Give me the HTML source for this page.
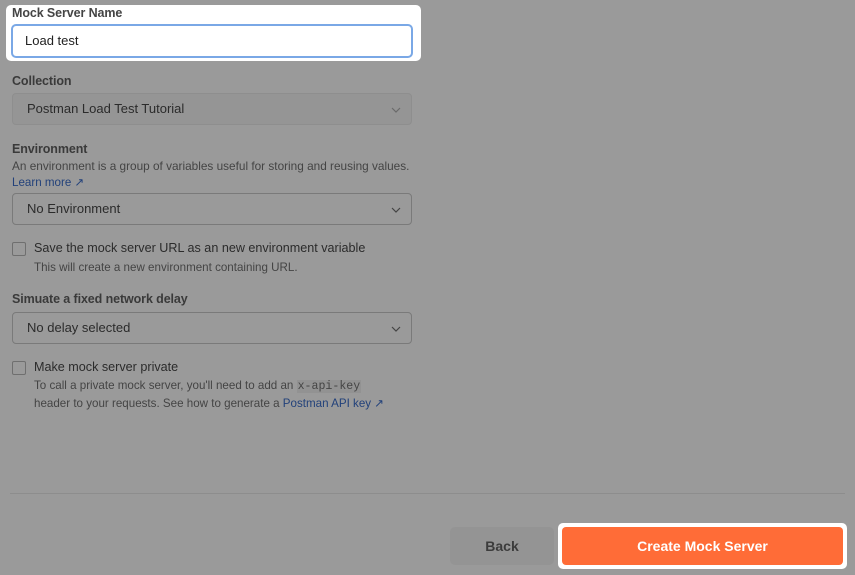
<!DOCTYPE html>
<html><head><meta charset="utf-8"><style>
body{margin:0;width:855px;height:575px;background:#9a9a9a;font-family:"Liberation Sans",sans-serif;position:relative;overflow:hidden;color:#2b2b2b}
.a{position:absolute}
.lbl{font-size:12.5px;font-weight:bold;color:#3a3a3a;letter-spacing:-0.1px}
.sel{position:absolute;left:12px;width:400px;height:30px;border:1px solid #7a7a7a;border-radius:4px;box-sizing:border-box;font-size:13px;line-height:28px;padding-left:14px;color:#2b2b2b}
.chev{position:absolute;right:10px;top:10px}
.cb{position:absolute;left:12px;width:14px;height:14px;border:1px solid #6f6f6f;border-radius:2px;box-sizing:border-box}
.t{font-size:12.6px;color:#2b2b2b}
.s{font-size:11.6px;color:#444}
.lnk{color:#22417a}
</style></head><body>
<div class="a" style="left:6px;top:5px;width:415px;height:56px;background:#fff;border-radius:5px"></div>
<div class="a lbl" style="left:12px;top:6px;color:#444">Mock Server Name</div>
<div class="a" style="left:11px;top:24px;width:402px;height:34px;border:2px solid #7aa8e6;border-radius:5px;box-sizing:border-box;font-size:13px;line-height:30px;padding-left:12px;color:#222">Load test</div>

<div class="a lbl" style="left:12px;top:74px">Collection</div>
<div class="sel" style="top:93px;height:32px;background:#959595;border-color:#8e8e8e;line-height:30px">Postman Load Test Tutorial<svg class="chev" width="10" height="8" viewBox="0 0 10 8" style="top:12px"><path d="M1 2l4 4 4-4" stroke="#6a6a6a" fill="none" stroke-width="1.2"/></svg></div>

<div class="a lbl" style="left:12px;top:142px">Environment</div>
<div class="a s" style="left:12px;top:159px;font-size:11.8px">An environment is a group of variables useful for storing and reusing values.</div>
<div class="a s lnk" style="left:12px;top:175px">Learn more ↗</div>
<div class="sel" style="top:193px;height:32px;line-height:30px">No Environment<svg class="chev" width="10" height="8" viewBox="0 0 10 8" style="top:12px"><path d="M1 2l4 4 4-4" stroke="#444" fill="none" stroke-width="1.2"/></svg></div>

<div class="cb" style="top:242px"></div>
<div class="a t" style="left:34px;top:241px">Save the mock server URL as an new environment variable</div>
<div class="a s" style="left:34px;top:261px">This will create a new environment containing URL.</div>

<div class="a lbl" style="left:12px;top:292px">Simuate a fixed network delay</div>
<div class="sel" style="top:312px;height:32px;line-height:30px">No delay selected<svg class="chev" width="10" height="8" viewBox="0 0 10 8" style="top:12px"><path d="M1 2l4 4 4-4" stroke="#444" fill="none" stroke-width="1.2"/></svg></div>

<div class="cb" style="top:361px"></div>
<div class="a t" style="left:34px;top:360px">Make mock server private</div>
<div class="a s" style="left:34px;top:379px">To call a private mock server, you'll need to add an <span style="font-family:'Liberation Mono',monospace;background:#929292;padding:0 1px">x-api-key</span></div>
<div class="a s" style="left:34px;top:396px">header to your requests. See how to generate a <span class="lnk">Postman API key ↗</span></div>

<div class="a" style="left:10px;top:493px;width:835px;height:1px;background:#8d8d8d"></div>

<div class="a" style="left:450px;top:527px;width:104px;height:38px;background:#949494;border-radius:5px;font-size:14px;font-weight:bold;color:#3c3c3c;text-align:center;line-height:38px">Back</div>
<div class="a" style="left:558px;top:523px;width:289px;height:46px;background:#fff;border-radius:5px"></div>
<div class="a" style="left:562px;top:527px;width:281px;height:38px;background:#ff6c37;border-radius:4px;font-size:14px;font-weight:bold;color:#fff;text-align:center;line-height:38px">Create Mock Server</div>
</body></html>
